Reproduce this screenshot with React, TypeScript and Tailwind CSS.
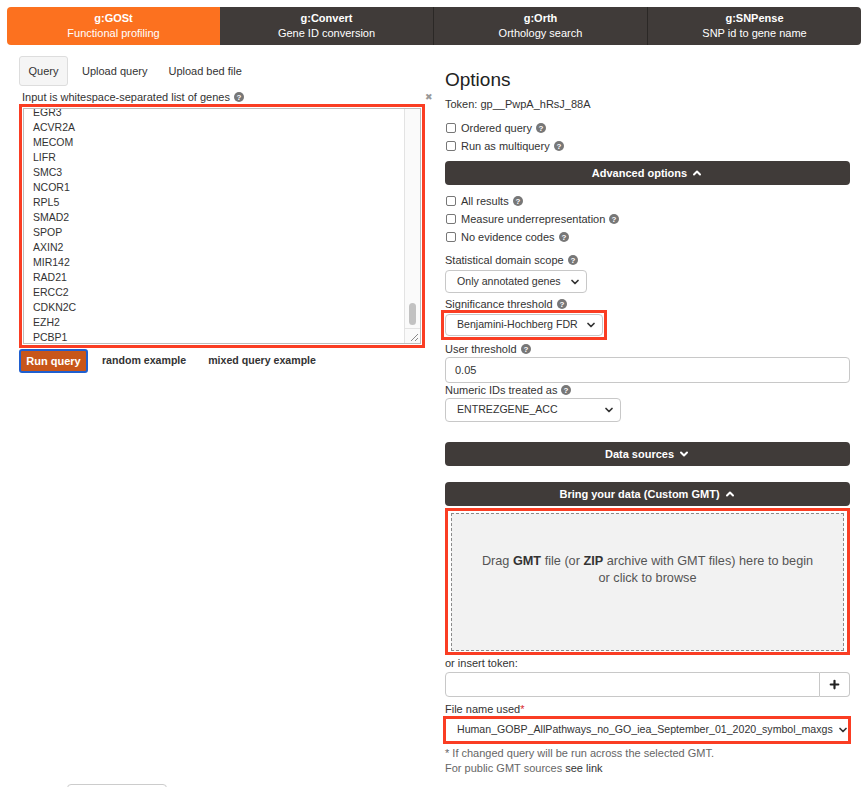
import { ChevronDown, ChevronUp, Plus } from "lucide-react";

const navTabs = [
  { title: "g:GOSt", sub: "Functional profiling", active: true },
  { title: "g:Convert", sub: "Gene ID conversion" },
  { title: "g:Orth", sub: "Orthology search" },
  { title: "g:SNPense", sub: "SNP id to gene name" },
];

const genes = [
  "EGR3",
  "ACVR2A",
  "MECOM",
  "LIFR",
  "SMC3",
  "NCOR1",
  "RPL5",
  "SMAD2",
  "SPOP",
  "AXIN2",
  "MIR142",
  "RAD21",
  "ERCC2",
  "CDKN2C",
  "EZH2",
  "PCBP1",
];

function Help() {
  return (
    <svg width="10" height="10" viewBox="0 0 10 10" className="ml-[4px] inline-block align-[-1px]">
      <circle cx="5" cy="5" r="5" fill="#777" />
      <text x="5" y="8" textAnchor="middle" fontSize="8" fontWeight="bold" fill="#fff" fontFamily="Liberation Sans, Arial, sans-serif">
        ?
      </text>
    </svg>
  );
}

function Check({ label, className }: { label: string; className?: string }) {
  return (
    <div className={`flex h-[18px] items-center ${className ?? ""}`}>
      <span className="ml-[1px] mr-[5px] h-[10px] w-[10px] shrink-0 rounded-[2px] border border-[#777] bg-white" />
      <span>
        {label}
        <Help />
      </span>
    </div>
  );
}

function Bar({ label, up }: { label: string; up?: boolean }) {
  return (
    <div className="flex h-[24px] items-center justify-center gap-[4px] rounded-[4px] bg-[#403b39] text-[11px] font-bold text-white">
      {label}
      {up ? (
        <ChevronUp size={12} strokeWidth={4} />
      ) : (
        <ChevronDown size={12} strokeWidth={4} />
      )}
    </div>
  );
}

function Select({ value, className }: { value: string; className?: string }) {
  return (
    <div
      className={`flex items-center justify-between overflow-hidden whitespace-nowrap rounded-[4px] border border-[#c8c8c8] bg-white pl-[11px] pr-[5px] text-[10.6px] ${className ?? ""}`}
    >
      <span>{value}</span>
      <ChevronDown size={12} strokeWidth={3.5} className="ml-[4px] shrink-0 text-[#333]" />
    </div>
  );
}

export default function App() {
  return (
    <div className="min-h-[787px] bg-white font-['Liberation_Sans',Arial,sans-serif] text-[11px] text-[#333]">
      <div className="pt-[7px]">
        <div className="mx-[7px] flex h-[38px] w-[854px]">
          {navTabs.map((t, i) => (
            <div
              key={t.title}
              className={`flex flex-1 flex-col items-center pt-[4px] text-white ${
                t.active
                  ? "rounded-l-[4px] bg-[#fc711f]"
                  : "bg-[#403b39] " + (i > 1 ? "border-l border-[#2b2826]" : "") + (i === 3 ? " rounded-r-[4px]" : "")
              }`}
            >
              <div className="h-[15px] leading-[15px] font-bold">{t.title}</div>
              <div className="h-[15px] leading-[15px]">{t.sub}</div>
            </div>
          ))}
        </div>
      </div>

      <div className="mt-[11px] grid grid-cols-[406px_405px] gap-x-[20px] pl-[19px]">
        {/* left column */}
        <div>
          <div className="flex h-[30px] items-center">
            <div className="flex h-[30px] w-[49px] items-center justify-center rounded-[3px] border border-[#ddd] bg-[#f5f5f5]">
              Query
            </div>
            <span className="ml-[14px]">Upload query</span>
            <span className="ml-[21px]">Upload bed file</span>
          </div>
          <div className="mt-[4px] flex h-[14px] items-center justify-between leading-[14px]">
            <span className="pl-[3px]">
              Input is whitespace-separated list of genes
              <Help />
            </span>
            <span className="-mr-[8px] text-[9px] text-[#999]">✖</span>
          </div>
          <div className="h-[244px] border-[3px] border-[#fa3d23] p-[1px]">
            <div className="flex h-full border border-[#bdbdbd] bg-white">
              <div className="flex-1 overflow-hidden">
                <div className="-mt-[4px] pl-[9px] text-[10.5px] leading-[15px] text-[#333]">
                  {genes.map((g) => (
                    <div key={g}>{g}</div>
                  ))}
                </div>
              </div>
              <div className="flex w-[16px] flex-col border-l border-[#e3e3e3] bg-[#fafafa]">
                <div className="flex-1 px-[4px] pt-[194px]">
                  <div className="h-[22px] rounded-full bg-[#c2c2c2]" />
                </div>
                <div className="relative h-[15px] border-t border-[#e3e3e3]">
                  <svg width="15" height="14" viewBox="0 0 15 14" className="absolute right-0 bottom-0">
                    <line x1="13" y1="5" x2="6" y2="12" stroke="#888" strokeWidth="1" />
                    <line x1="13" y1="9" x2="10" y2="12" stroke="#888" strokeWidth="1" />
                  </svg>
                </div>
              </div>
            </div>
          </div>
          <div className="mt-[1px] flex h-[24px] items-center">
            <div className="flex h-[24px] w-[69px] items-center justify-center rounded-[3px] border-2 border-[#1f5fcf] bg-[#c8561a] font-bold text-white">
              Run query
            </div>
            <span className="ml-[14px] text-[10.6px] font-bold">random example</span>
            <span className="ml-[22px] text-[10.6px] font-bold">mixed query example</span>
          </div>
          <div className="ml-[48px] mt-[411px] h-[20px] w-[100px] rounded-[4px] border border-[#ccc]" />
        </div>

        {/* right column */}
        <div>
          <div className="mt-[13px] h-[22px] text-[19px] leading-[22px] font-medium text-[#222]">Options</div>
          <div className="mt-[6px] h-[14px] leading-[14px]">Token: gp__PwpA_hRsJ_88A</div>
          <Check label="Ordered query" className="mt-[8px]" />
          <Check label="Run as multiquery" />
          <div className="mt-[6px]">
            <Bar label="Advanced options" up />
          </div>
          <Check label="All results" className="mt-[7px]" />
          <Check label="Measure underrepresentation" />
          <Check label="No evidence codes" />
          <div className="mt-[7px] h-[14px] leading-[14px]">
            Statistical domain scope
            <Help />
          </div>
          <Select value="Only annotated genes" className="mt-[3px] h-[23px] w-[142px]" />
          <div className="mt-[4px] h-[14px] leading-[14px]">
            Significance threshold
            <Help />
          </div>
          <div className="-mt-[1px] -ml-[4px] h-[30px] w-[166px] border-[3px] border-[#fa3d23] p-[1px]">
            <Select value="Benjamini-Hochberg FDR" className="h-full" />
          </div>
          <div className="mt-[2px] h-[14px] leading-[14px]">
            User threshold
            <Help />
          </div>
          <div className="mt-[1px] flex h-[26px] items-center rounded-[4px] border border-[#c8c8c8] pl-[9px]">0.05</div>
          <div className="h-[14px] leading-[14px]">
            Numeric IDs treated as
            <Help />
          </div>
          <Select value="ENTREZGENE_ACC" className="mt-[1px] h-[24px] w-[176px]" />
          <div className="mt-[20px]">
            <Bar label="Data sources" />
          </div>
          <div className="mt-[16px]">
            <Bar label="Bring your data (Custom GMT)" up />
          </div>
          <div className="mt-[2px] h-[147px] border-[3px] border-[#fa3d23] px-[3px] pt-[2px] pb-[1px]">
            <div className="flex h-full flex-col items-center justify-center border border-dashed border-[#8a8a8a] bg-[#f2f2f2] pb-[24px] text-center text-[12.7px] leading-[17px] text-[#555]">
              <div>
                Drag <b className="text-[#333]">GMT</b> file (or <b className="text-[#333]">ZIP</b> archive with GMT files) here to begin
              </div>
              <div>or click to browse</div>
            </div>
          </div>
          <div className="mt-[1px] h-[14px] leading-[14px]">or insert token:</div>
          <div className="mt-[2px] flex h-[25px]">
            <div className="flex-1 rounded-l-[4px] border border-[#c8c8c8]" />
            <div className="flex w-[30px] items-center justify-center rounded-r-[4px] border border-l-0 border-[#c8c8c8] bg-white">
              <Plus size={13} strokeWidth={4} className="text-[#222]" />
            </div>
          </div>
          <div className="mt-[5px] h-[14px] leading-[14px]">
            File name used<span className="text-[#d9272e]">*</span>
          </div>
          <div className="-ml-[2px] h-[28px] w-[408px] border-[3px] border-[#fa3d23]">
            <Select value="Human_GOBP_AllPathways_no_GO_iea_September_01_2020_symbol_maxgs" className="h-full rounded-none border-0 pl-[10px] pr-[3px]" />
          </div>
          <div className="mt-[2px] h-[14px] leading-[14px] text-[#666]">* If changed query will be run across the selected GMT.</div>
          <div className="mt-[1px] h-[14px] leading-[14px] text-[#666]">
            For public GMT sources <span className="text-[#333]">see link</span>
          </div>
        </div>
      </div>
    </div>
  );
}
